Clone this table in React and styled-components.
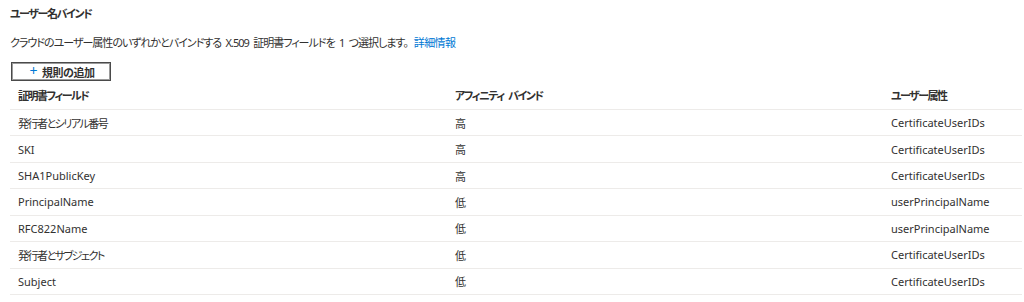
import React from "react";
import styled, { createGlobalStyle } from "styled-components";

const Global = createGlobalStyle`
  html, body { margin: 0; background: #fff; }
  body {
    font-family: "Noto Sans", "Noto Sans CJK JP", sans-serif;
    font-feature-settings: "palt";
    color: #323130;
    -webkit-font-smoothing: antialiased;
  }
`;

const Page = styled.div`
  padding: 6px 2px 0 10px;
`;

const Title = styled.h2`
  margin: 0;
  font-size: 11px;
  font-weight: 700;
  line-height: 16px;
  letter-spacing: -1.4px;
`;

const Description = styled.p`
  margin: 13px 0 0;
  font-size: 11px;
  line-height: 16px;
  letter-spacing: -1px;
  word-spacing: 2.5px;
`;

const Link = styled.a`
  color: #0078d4;
  text-decoration: none;
  margin-left: 6px;
  letter-spacing: -0.6px;
`;

const AddButton = styled.button`
  margin: 11px 0 0 1px;
  width: 100px;
  height: 19px;
  display: flex;
  align-items: center;
  justify-content: center;
  gap: 5px;
  padding: 0 0 0 2px;
  background: #fff;
  border: 1px solid #4a4a4a;
  box-shadow: inset 0 0 0 1px #9a9a9a;
  font-family: inherit;
  font-feature-settings: "palt";
  font-size: 11px;
  font-weight: 700;
  letter-spacing: -0.5px;
  color: #323130;
  cursor: pointer;
`;

const Plus = styled.span`
  color: #0078d4;
  font-weight: 400;
  font-size: 14px;
  line-height: 1;
  margin-top: -1px;
`;

const Row = styled.div`
  display: grid;
  grid-template-columns: 437px 436px 1fr;
  align-items: center;
  height: ${(p) => p.h || "26.43px"};
  box-sizing: border-box;
  border-bottom: 1px solid #edebe9;
`;

const Cell = styled.div`
  padding-left: 8px;
  font-size: 11px;
  font-weight: ${(p) => (p.head ? 700 : 400)};
  letter-spacing: ${(p) => (p.tight ? "-1.5px" : "0")};
  word-spacing: ${(p) => (p.tight ? "3px" : "0")};
  white-space: nowrap;
`;

const isCjk = (s) => /[^\x00-\x7f]/.test(s);

const rows = [
  ["発行者とシリアル番号", "高", "CertificateUserIDs"],
  ["SKI", "高", "CertificateUserIDs"],
  ["SHA1PublicKey", "高", "CertificateUserIDs"],
  ["PrincipalName", "低", "userPrincipalName"],
  ["RFC822Name", "低", "userPrincipalName"],
  ["発行者とサブジェクト", "低", "CertificateUserIDs"],
  ["Subject", "低", "CertificateUserIDs"],
];

const headers = ["証明書フィールド", "アフィニティ バインド", "ユーザー属性"];

export default function App() {
  return (
    <Page>
      <Global />
      <Title>ユーザー名バインド</Title>
      <Description>
        クラウドのユーザー属性のいずれかとバインドする X.509 証明書フィールドを 1 つ選択します。
        <Link href="#">詳細情報</Link>
      </Description>
      <AddButton>
        <Plus>+</Plus>規則の追加
      </AddButton>
      <Row h="29px">
        {headers.map((h) => (
          <Cell key={h} head tight>
            {h}
          </Cell>
        ))}
      </Row>
      {rows.map((r, i) => (
        <Row key={i}>
          {r.map((c, j) => (
            <Cell key={j} tight={isCjk(c)}>
              {c}
            </Cell>
          ))}
        </Row>
      ))}
    </Page>
  );
}
